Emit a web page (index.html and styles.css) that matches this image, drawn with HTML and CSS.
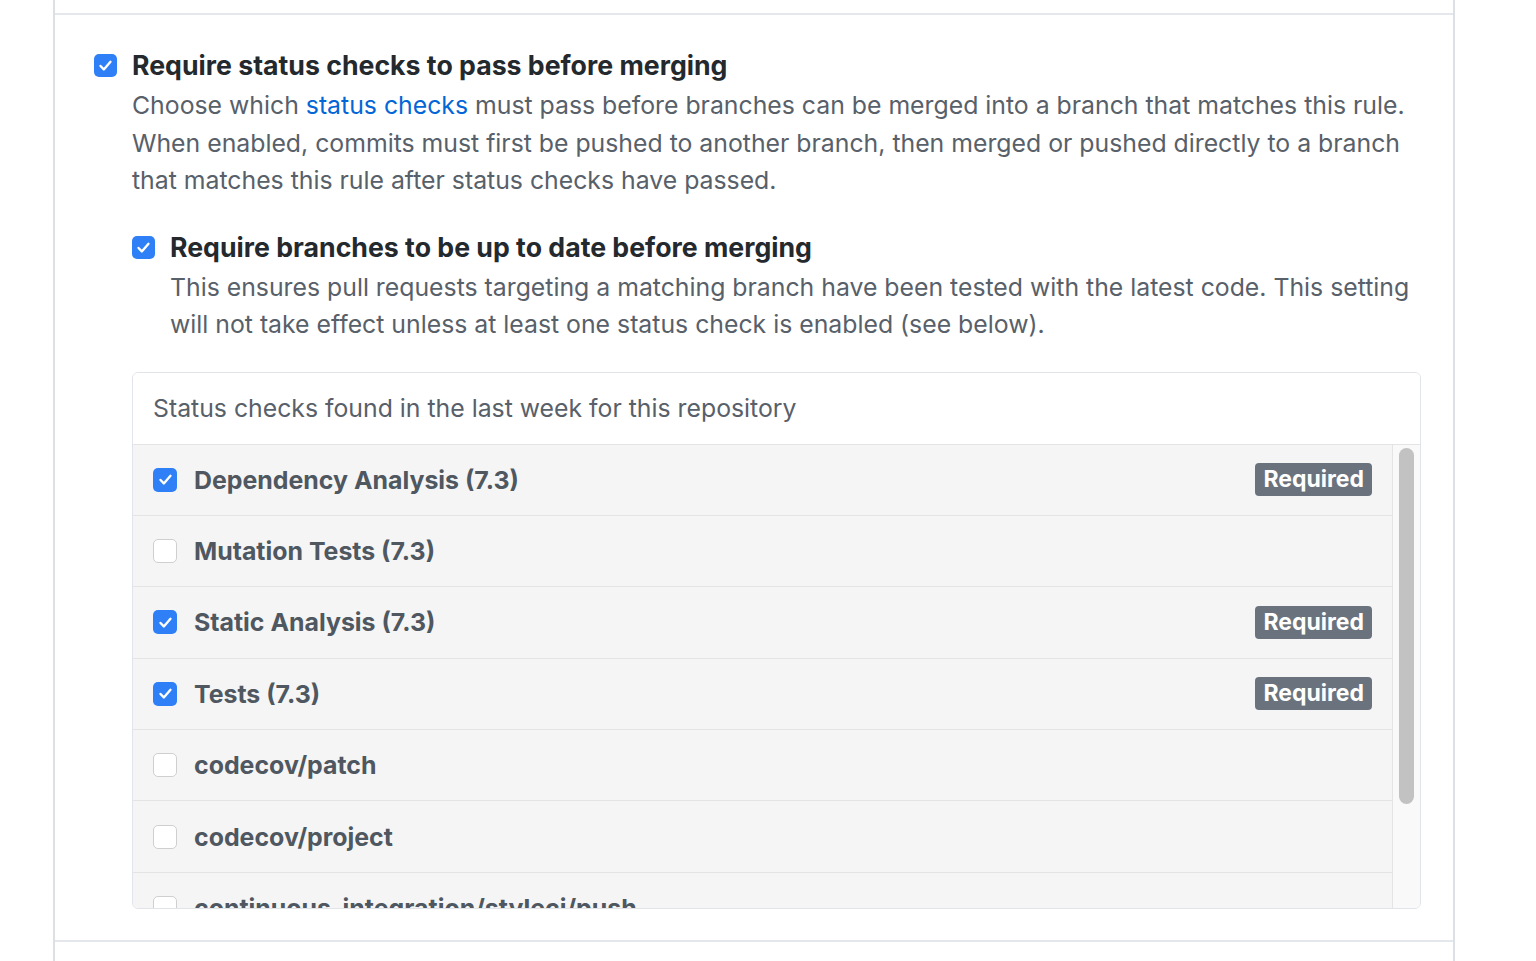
FILE: index.html
```html
<!DOCTYPE html>
<html lang="en">
<head>
<meta charset="utf-8">
<title>Branch protection</title>
<link rel="stylesheet" href="styles.css">
</head>
<body>
<div class="frame">
  <div class="section section-prev"></div>
  <div class="section section-main">
    <div class="option">
      <span class="cb cb-on"><svg viewBox="0 0 16 16"><path d="M3.8 8.4l2.8 2.9 5.6-6.4"/></svg></span>
      <div class="option-body">
        <div class="option-title">Require status checks to pass before merging</div>
        <p class="note">Choose which <a href="#">status checks</a> must pass before branches can be merged into a branch that matches this rule. When enabled, commits must first be pushed to another branch, then merged or pushed directly to a branch that matches this rule after status checks have passed.</p>
      </div>
    </div>
    <div class="nested">
      <div class="option">
        <span class="cb cb-on"><svg viewBox="0 0 16 16"><path d="M3.8 8.4l2.8 2.9 5.6-6.4"/></svg></span>
        <div class="option-body">
          <div class="option-title">Require branches to be up to date before merging</div>
          <p class="note">This ensures pull requests targeting a matching branch have been tested with the latest code. This setting will not take effect unless at least one status check is enabled (see below).</p>
        </div>
      </div>
      <div class="checks">
        <div class="checks-head">Status checks found in the last week for this repository</div>
        <div class="checks-body">
          <div class="checks-list">
            <div class="row"><span class="cb cb-on"><svg viewBox="0 0 16 16"><path d="M3.8 8.4l2.8 2.9 5.6-6.4"/></svg></span><span class="row-name">Dependency Analysis (7.3)</span><span class="badge">Required</span></div>
            <div class="row"><span class="cb cb-off"></span><span class="row-name">Mutation Tests (7.3)</span></div>
            <div class="row"><span class="cb cb-on"><svg viewBox="0 0 16 16"><path d="M3.8 8.4l2.8 2.9 5.6-6.4"/></svg></span><span class="row-name">Static Analysis (7.3)</span><span class="badge">Required</span></div>
            <div class="row"><span class="cb cb-on"><svg viewBox="0 0 16 16"><path d="M3.8 8.4l2.8 2.9 5.6-6.4"/></svg></span><span class="row-name">Tests (7.3)</span><span class="badge">Required</span></div>
            <div class="row"><span class="cb cb-off"></span><span class="row-name">codecov/patch</span></div>
            <div class="row"><span class="cb cb-off"></span><span class="row-name">codecov/project</span></div>
            <div class="row"><span class="cb cb-off"></span><span class="row-name">continuous-integration/styleci/push</span></div>
          </div>
          <div class="scrollbar"><div class="thumb"></div></div>
        </div>
      </div>
    </div>
  </div>
  <div class="section section-next"></div>
</div>
</body>
</html>
```
FILE: styles.css
```css
html, body {
  margin: 0;
  padding: 0;
  background: #ffffff;
}
body {
  font-family: Inter, "Noto Sans", sans-serif;
  color: #24292e;
  overflow: hidden;
  height: 961px;
}
.frame {
  margin-left: 53px;
  width: 1398px;
  border-left: 2px solid #dcdfe3;
  border-right: 2px solid #dcdfe3;
  min-height: 961px;
}
.section-prev {
  height: 13px;
}
.section-main {
  border-top: 2px solid #e4e7eb;
  border-bottom: 2px solid #e4e7eb;
  padding: 31px 32px 31px 39px;
}
.section-next {
  height: 40px;
}
.option {
  display: flex;
  align-items: flex-start;
  gap: 15px;
}
.option > .cb {
  margin-top: 8px;
}
.option-body {
  flex: 1;
  min-width: 0;
}
.option-title {
  font-size: 26.7px;
  font-weight: 700;
  line-height: 39px;
  color: #24292e;
}
.note {
  margin: 2px 0 0;
  font-size: 24.8px;
  line-height: 37.5px;
  color: #586069;
}
.note a {
  color: #0366d6;
  text-decoration: none;
}
.nested {
  margin-left: 38px;
  margin-top: 28px;
}
.cb {
  flex: none;
  width: 23px;
  height: 23px;
  box-sizing: border-box;
  border-radius: 5px;
  display: inline-flex;
  align-items: center;
  justify-content: center;
}
.cb-on {
  background: #2f80f7;
}
.cb-on svg {
  width: 19px;
  height: 19px;
  fill: none;
  stroke: #ffffff;
  stroke-width: 2;
  stroke-linecap: round;
  stroke-linejoin: round;
}
.cb-off {
  background: #ffffff;
  border: 1.5px solid #cfcfcf;
}
.checks {
  margin-top: 28px;
  border: 1.5px solid #e1e4e8;
  border-radius: 6px;
  overflow: hidden;
  height: 537px;
  box-sizing: border-box;
  display: flex;
  flex-direction: column;
}
.checks-head {
  flex: none;
  height: 71px;
  border-bottom: 1px solid #e4e4e4;
  display: flex;
  align-items: center;
  padding-left: 20px;
  font-size: 24.8px;
  color: #586069;
  background: #ffffff;
}
.checks-body {
  flex: 1;
  display: flex;
  min-height: 0;
  overflow: hidden;
  background: #f5f5f5;
}
.checks-list {
  flex: 1;
  min-width: 0;
}
.row {
  height: 70.4px;
  border-bottom: 1px solid #e4e4e4;
  display: flex;
  align-items: center;
  padding: 0 20px 0 20px;
  gap: 17px;
}
.row .cb {
  width: 24px;
  height: 24px;
}
.row-name {
  flex: 1;
  font-size: 24.9px;
  font-weight: 700;
  color: #4f5760;
  white-space: nowrap;
}
.badge {
  flex: none;
  background: #6a737d;
  color: #ffffff;
  font-size: 23px;
  font-weight: 700;
  height: 33px;
  line-height: 33px;
  padding: 0 8px;
  border-radius: 4px;
}
.scrollbar {
  flex: none;
  width: 27px;
  border-left: 1px solid #e4e4e4;
  background: #f9f9f9;
  padding-top: 3px;
  display: flex;
  justify-content: center;
}
.thumb {
  width: 15px;
  height: 356px;
  border-radius: 8px;
  background: #c2c2c2;
}
```
